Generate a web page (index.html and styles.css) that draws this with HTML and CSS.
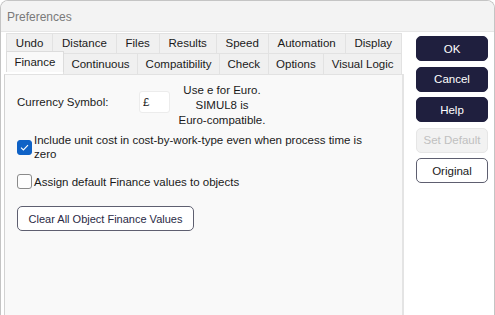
FILE: index.html
```html
<!DOCTYPE html>
<html lang="en">
<head>
    <meta charset="UTF-8">
    <title>Preferences</title>
    <link rel="stylesheet" href="styles.css">
</head>
<body>
    <div class="window">
        <div class="titlebar">Preferences</div>
        <div class="body">
            <div class="tabs-area">
                <div class="tab-row">
                    <div class="tab">Undo</div>
                    <div class="tab">Distance</div>
                    <div class="tab">Files</div>
                    <div class="tab">Results</div>
                    <div class="tab">Speed</div>
                    <div class="tab">Automation</div>
                    <div class="tab">Display</div>
                </div>
                <div class="tab-row">
                    <div class="tab active">Finance</div>
                    <div class="tab">Continuous</div>
                    <div class="tab">Compatibility</div>
                    <div class="tab">Check</div>
                    <div class="tab">Options</div>
                    <div class="tab">Visual Logic</div>
                </div>
                <div class="panel">
                    <div class="currency-row">
                        <label class="currency-label" for="currency">Currency Symbol:</label>
                        <input type="text" id="currency" class="currency-input" value="£">
                        <div class="euro-note">Use e for Euro.<br>SIMUL8 is<br>Euro-compatible.</div>
                    </div>
                    <div class="check-row">
                        <span class="box checked">
                            <svg width="9" height="7" viewBox="0 0 9 7"><path d="M1 3.6 L3.4 6 L8 1.2" fill="none" stroke="#fff" stroke-width="1.1"/></svg>
                        </span>
                        <span class="check-text">Include unit cost in cost-by-work-type even when process time is zero</span>
                    </div>
                    <div class="check-row second">
                        <span class="box"></span>
                        <span class="check-text">Assign default Finance values to objects</span>
                    </div>
                    <button class="clear-btn">Clear All Object Finance Values</button>
                </div>
            </div>
            <div class="side">
                <button class="btn dark">OK</button>
                <button class="btn dark">Cancel</button>
                <button class="btn dark">Help</button>
                <button class="btn disabled">Set Default</button>
                <button class="btn outline">Original</button>
            </div>
        </div>
    </div>
</body>
</html>
```

FILE: styles.css
```css
body {
    margin: 0;
    font-family: "Liberation Sans", Arial, sans-serif;
    font-size: 11.5px;
    color: #1a1a1a;
    background-color: white;
}
.window {
    width: 493px;
    height: 315px;
    border: 1px solid #c4c4c4;
    border-bottom: none;
    border-radius: 8px 8px 0 0;
    background-color: white;
    overflow: hidden;
    display: flex;
    flex-direction: column;
}
.titlebar {
    height: 30px;
    line-height: 32px;
    padding-left: 6px;
    font-size: 12px;
    color: #7a7a7a;
    background-color: #f3f3f3;
    border-bottom: 1px solid #e6e6e6;
}
.body {
    flex: 1;
    display: flex;
}
.tabs-area {
    width: 400px;
    padding-left: 3px;
    display: flex;
    flex-direction: column;
}
.tab-row {
    display: flex;
    margin-left: 2px;
    width: 395px;
}
.tab-row:first-child {
    margin-top: 1px;
}
.tab {
    flex: 1 1 auto;
    height: 19px;
    line-height: 19px;
    text-align: center;
    background-color: #f0f0f0;
    border: 1px solid #e2e2e2;
    border-bottom: none;
    margin-right: -1px;
}
.tab-row + .tab-row .tab {
    height: 20px;
    line-height: 21px;
}
.tab.active {
    position: relative;
    z-index: 1;
    margin-top: -2px;
    height: 23px;
    line-height: 21px;
    background-color: #f9f9f9;
    border-color: #dcdcdc;
}
.panel {
    flex: 1;
    background-color: #f9f9f9;
    border-left: 1px solid #d2d2d2;
    border-top: 1px solid #e2e2e2;
    border-right: 2px solid #e4e4e4;
    padding: 8px 0 0 12px;
}
.currency-row {
    display: flex;
    align-items: flex-start;
}
.currency-label {
    margin-top: 8px;
    line-height: 22px;
    width: 122px;
}
.currency-input {
    margin-top: 8px;
    width: 31px;
    height: 22px;
    box-sizing: border-box;
    border: 1px solid #ececec;
    border-radius: 3px;
    padding: 0 3px;
    font-family: "Liberation Sans", Arial, sans-serif;
    font-size: 11.5px;
    color: #1a1a1a;
    background-color: white;
}
.euro-note {
    width: 90px;
    margin-left: 7px;
    text-align: center;
    line-height: 15px;
}
.check-row {
    display: flex;
    align-items: center;
    margin-top: 5px;
}
.check-row.second {
    margin-top: 13px;
}
.check-text {
    margin-left: 2px;
    line-height: 14px;
    max-width: 345px;
}
.box {
    width: 13px;
    height: 13px;
    border: 1px solid #8a8a8a;
    border-radius: 3px;
    background-color: #fdfdfd;
    display: flex;
    align-items: center;
    justify-content: center;
    flex-shrink: 0;
}
.box.checked {
    background-color: #0f62c6;
    border-color: #0f62c6;
}
.clear-btn {
    margin-top: 17px;
    width: 177px;
    height: 25px;
    border: 1.5px solid #5e5f70;
    border-radius: 5px;
    background-color: white;
    font-family: "Liberation Sans", Arial, sans-serif;
    font-size: 11px;
    color: #2a2a45;
    cursor: pointer;
}
.side {
    flex: 1;
    display: flex;
    flex-direction: column;
    gap: 5.5px;
    padding: 4px 0 0 12px;
}
.btn {
    width: 72px;
    height: 25px;
    border-radius: 5px;
    font-family: "Liberation Sans", Arial, sans-serif;
    font-size: 11.5px;
    cursor: pointer;
}
.btn.dark {
    background-color: #1f1f3e;
    border: 1px solid #1f1f3e;
    color: white;
}
.btn.disabled {
    background-color: #f2f2f2;
    border: 1px solid #e6e6e6;
    color: #c0c0c0;
}
.btn.outline {
    background-color: white;
    border: 1.5px solid #5e5f70;
    color: #1a1a1a;
}
```
